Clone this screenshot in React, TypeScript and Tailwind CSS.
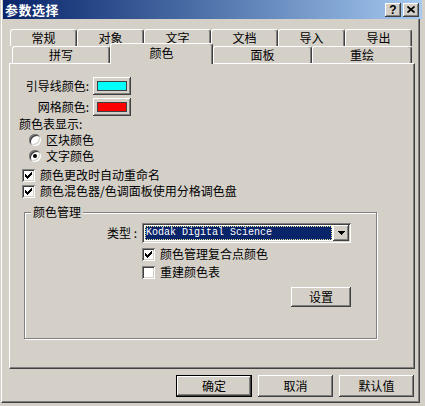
import React from "react";

const raised =
  "shadow-[inset_-1px_-1px_#404040,inset_1px_1px_#ffffff,inset_-2px_-2px_#808080,inset_2px_2px_#d4d0c8]";
const sunken =
  "shadow-[inset_1px_1px_#808080,inset_-1px_-1px_#ffffff,inset_2px_2px_#404040,inset_-2px_-2px_#d4d0c8]";

const topTabs = [
  { label: "常规", w: "w-[67px]" },
  { label: "对象", w: "w-[67px]" },
  { label: "文字", w: "w-[67px]" },
  { label: "文档", w: "w-[67px]" },
  { label: "导入", w: "w-[67px]" },
  { label: "导出", w: "w-[67px]" },
];

const frontTabs = [
  { label: "拼写", w: "w-[98px]", active: false },
  { label: "颜色", w: "w-[103px]", active: true },
  { label: "面板", w: "w-[99px]", active: false },
  { label: "重绘", w: "w-[100px]", active: false },
];

function Tab({ label, w, active }: { label: string; w: string; active?: boolean }) {
  return (
    <div
      className={`${w} flex items-center justify-center bg-[#d4d0c8] border-t border-l border-r border-t-white border-l-white border-r-[#404040] rounded-t-[3px] shadow-[inset_-1px_0_#808080] ${
        active ? "-mt-[3px] h-[21px] relative z-10 pb-[2px]" : "h-[17px]"
      }`}
    >
      {label}
    </div>
  );
}

function CheckMark() {
  return (
    <svg width="7" height="7" viewBox="0 0 7 7" shapeRendering="crispEdges">
      <rect x="6" y="0" width="1" height="1" />
      <rect x="5" y="1" width="2" height="1" />
      <rect x="0" y="2" width="1" height="1" />
      <rect x="4" y="2" width="3" height="1" />
      <rect x="0" y="3" width="2" height="1" />
      <rect x="3" y="3" width="3" height="1" />
      <rect x="0" y="4" width="5" height="1" />
      <rect x="1" y="5" width="3" height="1" />
      <rect x="2" y="6" width="1" height="1" />
    </svg>
  );
}

function Checkbox({ label, checked }: { label: string; checked?: boolean }) {
  return (
    <div className="flex items-center gap-[5px] h-[16px] leading-[16px]">
      <div className={`w-[13px] h-[13px] bg-white flex items-center justify-center ${sunken}`}>
        {checked && <CheckMark />}
      </div>
      <span>{label}</span>
    </div>
  );
}

function Radio({ label, checked }: { label: string; checked?: boolean }) {
  return (
    <div className="flex items-center gap-[5px] h-[16px] leading-[16px] ml-[10px]">
      <div className={`w-[12px] h-[12px] rounded-full bg-white flex items-center justify-center ${sunken}`}>
        {checked && <div className="w-[4px] h-[4px] rounded-full bg-black" />}
      </div>
      <span>{label}</span>
    </div>
  );
}

function Swatch({ color }: { color: string }) {
  return (
    <div className={`w-[38px] h-[18px] bg-[#d4d0c8] flex items-center justify-center ${raised}`}>
      <div className={`w-[30px] h-[10px] border border-[#404040] ${color}`} />
    </div>
  );
}

export default function App() {
  return (
    <div className="w-[425px] h-[406px] bg-[#d4d0c8] overflow-hidden font-['Noto_Sans_CJK_SC','Noto_Sans',sans-serif] text-[12px] text-black leading-[16px]">
      <div className="ml-[1px] w-[419px] h-[403px] border-l border-r border-b border-l-white border-r-[#404040] border-b-[#404040] shadow-[inset_-1px_-1px_#808080]">
        {/* title bar */}
        <div className="ml-[1px] w-[419px] h-[19px] bg-gradient-to-r from-[#0a246a] to-[#a6caf0] flex items-center pl-[2px] pr-[3px]">
          <span className="text-white font-bold text-[13px] tracking-[0.5px]">参数选择</span>
          <div className="ml-auto flex gap-[2px]">
            <div className={`w-[16px] h-[14px] bg-[#d4d0c8] flex items-center justify-center font-['Liberation_Sans',sans-serif] font-bold text-[12px] leading-[14px] ${raised}`}>
              ?
            </div>
            <div className={`w-[16px] h-[14px] bg-[#d4d0c8] flex items-center justify-center ${raised}`}>
              <svg width="8" height="7" viewBox="0 0 8 7">
                <path d="M0.5 0.5 L7.5 6.5 M7.5 0.5 L0.5 6.5" stroke="black" strokeWidth="1.7" />
              </svg>
            </div>
          </div>
        </div>

        {/* tabs */}
        <div className="mt-[10px] ml-[8px] flex h-[17px]">
          {topTabs.map((t) => (
            <Tab key={t.label} label={t.label} w={t.w} />
          ))}
        </div>
        <div className="ml-[10px] flex items-start h-[17px]">
          {frontTabs.map((t) => (
            <Tab key={t.label} label={t.label} w={t.w} active={t.active} />
          ))}
        </div>

        {/* panel */}
        <div className="ml-[7px] w-[406px] h-[306px] border-t border-l border-r border-b border-t-white border-l-white border-r-[#404040] border-b-[#404040] shadow-[inset_-1px_-1px_#808080] pt-[13px] pl-[9px]">
          <div className="grid grid-cols-[70px_38px] gap-x-[4px] gap-y-[3px] items-center">
            <span className="text-right">引导线颜色:</span>
            <Swatch color="bg-[#00ffff]" />
            <span className="text-right">网格颜色:</span>
            <Swatch color="bg-[#ff0000]" />
          </div>
          <div className="h-[16px]">颜色表显示:</div>
          <Radio label="区块颜色" />
          <Radio label="文字颜色" checked />
          <div className="mt-[3px] ml-[3px] flex flex-col">
            <Checkbox label="颜色更改时自动重命名" checked />
            <Checkbox label="颜色混色器/色调面板使用分格调色盘" checked />
          </div>

          {/* group box */}
          <div className="relative mt-[13px] ml-[5px] w-[353px] h-[127px] border border-[#808080] shadow-[inset_1px_1px_#ffffff,1px_1px_#ffffff] pt-[10px]">
            <span className="absolute -top-[9px] left-[6px] px-[2px] bg-[#d4d0c8]">颜色管理</span>
            <div className="grid grid-cols-[115px_209px] gap-x-[2px]">
              <span className="text-right self-center pr-[3px]">类型 :</span>
              <div className={`h-[20px] bg-white flex items-center p-[2px] ${sunken}`}>
                <div className="ml-[1px] w-[187px] h-[14px] bg-[#0a246a] outline outline-1 outline-dotted outline-[#e8e8a0] -outline-offset-1 text-white font-['Liberation_Mono',monospace] text-[10px] leading-[14px] pl-[1px]">
                  Kodak Digital Science
                </div>
                <div className={`ml-auto w-[16px] h-[16px] bg-[#d4d0c8] flex items-center justify-center ${raised}`}>
                  <svg width="7" height="4" viewBox="0 0 7 4" shapeRendering="crispEdges">
                    <polygon points="0,0 7,0 3.5,4" fill="black" />
                  </svg>
                </div>
              </div>
              <span />
              <div className="mt-[3px] h-[16px] flex items-center">
                <Checkbox label="颜色管理复合点颜色" checked />
              </div>
              <span />
              <div className="mt-[2px] h-[16px] flex items-center">
                <Checkbox label="重建颜色表" />
              </div>
              <span />
              <div className="mt-[7px] flex justify-end">
                <div className={`w-[60px] h-[20px] bg-[#d4d0c8] flex items-center justify-center ${raised}`}>
                  设置
                </div>
              </div>
            </div>
          </div>
        </div>

        {/* dialog buttons */}
        <div className="mt-[6px] pr-[5px] flex justify-end gap-[6px]">
          <div className="w-[76px] h-[22px] border border-black flex items-center justify-center shadow-[inset_-1px_-1px_#404040,inset_1px_1px_#ffffff,inset_-2px_-2px_#808080]">
            确定
          </div>
          <div className={`w-[75px] h-[22px] flex items-center justify-center ${raised}`}>取消</div>
          <div className={`w-[75px] h-[22px] flex items-center justify-center ${raised}`}>默认值</div>
        </div>
      </div>
    </div>
  );
}
